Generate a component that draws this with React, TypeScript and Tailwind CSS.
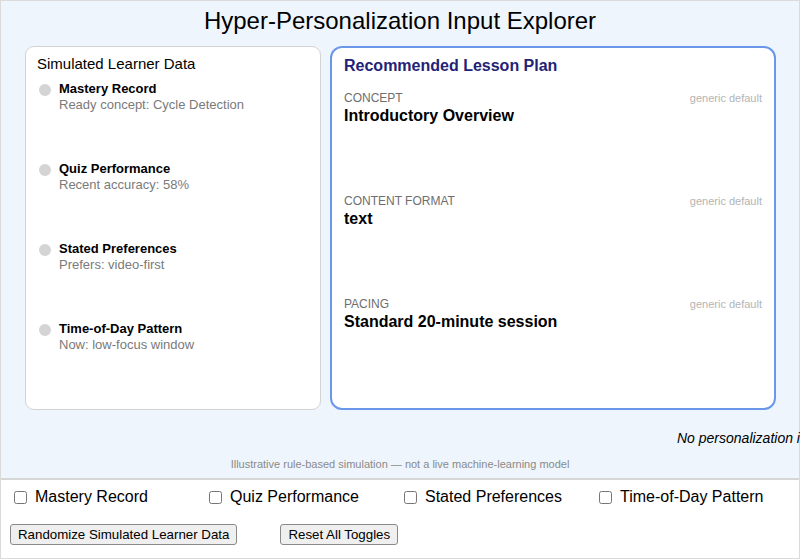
import { useState } from "react";

const SIGNALS = [
  { key: "mastery", name: "Mastery Record", detail: "Ready concept: Cycle Detection" },
  { key: "quiz", name: "Quiz Performance", detail: "Recent accuracy: 58%" },
  { key: "prefs", name: "Stated Preferences", detail: "Prefers: video-first" },
  { key: "time", name: "Time-of-Day Pattern", detail: "Now: low-focus window" },
] as const;

const PLAN = [
  { label: "Concept", value: "Introductory Overview" },
  { label: "Content Format", value: "text" },
  { label: "Pacing", value: "Standard 20-minute session" },
];

const App = () => {
  const [active, setActive] = useState<Record<string, boolean>>({});

  return (
    <div className="h-[560px] w-[800px] overflow-hidden bg-white font-['Liberation_Sans',Arial,sans-serif] text-black">
      <div className="flex h-[559px] flex-col border border-[#dadada]">
        <div className="flex h-[479px] flex-col border-b-2 border-[#d6d6d6] bg-[#eef5fd]">
          <h1 className="pt-[5px] text-center text-[24px] leading-[30px]">Hyper-Personalization Input Explorer</h1>

          <div className="mt-[10px] flex gap-[9px] pl-[24px]">
            <section className="h-[364px] w-[296px] rounded-[9px] border border-[#d3d3d3] bg-white px-[11px] pt-[7px]">
              <h2 className="text-[15px] leading-[19px]">Simulated Learner Data</h2>
              <ul className="mt-[8px]">
                {SIGNALS.map((s) => (
                  <li key={s.key} className="flex h-[80px] items-start gap-[8px] pl-[2px]">
                    <span
                      className={
                        active[s.key]
                          ? "mt-[3px] h-[12px] w-[12px] shrink-0 rounded-full bg-[#4caf50]"
                          : "mt-[3px] h-[12px] w-[12px] shrink-0 rounded-full bg-[#d4d4d4]"
                      }
                    />
                    <div>
                      <div className="text-[13px] font-bold leading-[16px]">{s.name}</div>
                      <div className="text-[13px] leading-[16px] text-[#7a7a7a]">{s.detail}</div>
                    </div>
                  </li>
                ))}
              </ul>
            </section>

            <section className="h-[364px] w-[446px] rounded-[12px] border-2 border-[#6a97ec] bg-white px-[12px] pt-[8px]">
              <h2 className="text-[16px] font-bold leading-[20px] text-[#1f2275]">Recommended Lesson Plan</h2>
              <div className="mt-[14px]">
                {PLAN.map((p) => (
                  <div key={p.label} className="h-[103px]">
                    <div className="flex items-center justify-between">
                      <span className="text-[12px] uppercase leading-[16px] text-[#6e6e6e]">{p.label}</span>
                      <span className="text-[11px] leading-[16px] text-[#b4b4b4]">generic default</span>
                    </div>
                    <div className="text-[16px] font-bold leading-[20px]">{p.value}</div>
                  </div>
                ))}
              </div>
            </section>
          </div>

          <p className="mt-[18px] whitespace-nowrap pl-[676px] text-[14px] italic leading-[20px]">
            No personalization inputs active — showing generic defaults
          </p>
          <p className="mt-[9px] text-center text-[11px] leading-[14px] text-[#8a8a8a]">
            Illustrative rule-based simulation — not a live machine-learning model
          </p>
        </div>

        <div className="flex flex-1 flex-col">
          <div className="mt-[7px] grid grid-cols-4 px-[9px]">
            {SIGNALS.map((s) => (
              <label key={s.key} className="flex items-center gap-[8px] pl-[4px] text-[16px] leading-[20px]">
                <input
                  type="checkbox"
                  checked={!!active[s.key]}
                  onChange={() => setActive((prev) => ({ ...prev, [s.key]: !prev[s.key] }))}
                  className="h-[13px] w-[13px]"
                />
                {s.name}
              </label>
            ))}
          </div>
          <div className="mt-[17px] flex gap-[43px] pl-[9px]">
            <button
              type="button"
              className="h-[21px] rounded-[3px] border border-[#8a8a8a] bg-[#efefef] px-[7px] text-[13.3px] leading-[19px]"
            >
              Randomize Simulated Learner Data
            </button>
            <button
              type="button"
              onClick={() => setActive({})}
              className="h-[21px] rounded-[3px] border border-[#8a8a8a] bg-[#efefef] px-[7px] text-[13.3px] leading-[19px]"
            >
              Reset All Toggles
            </button>
          </div>
        </div>
      </div>
    </div>
  );
};

export default App;
